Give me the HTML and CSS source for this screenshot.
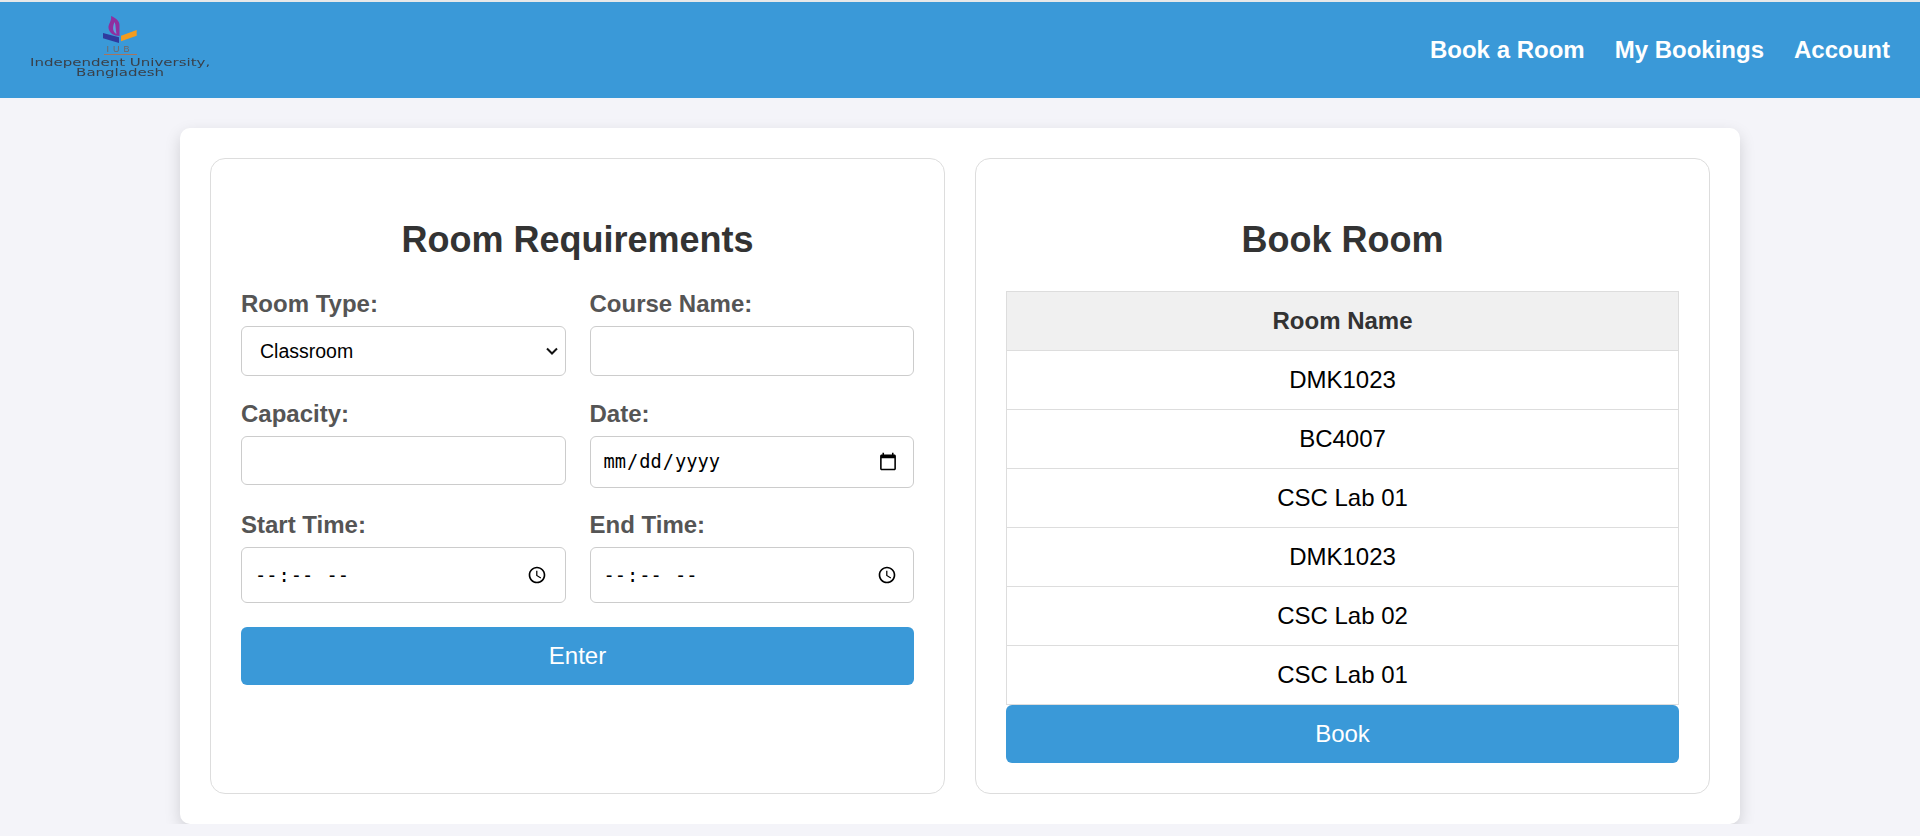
FILE: index.html
```html
<!DOCTYPE html>
<html lang="en">
<head>
  <meta charset="UTF-8" />
  <meta name="viewport" content="width=device-width, initial-scale=1.0"/>
  <title>Book a Room</title>
  <link rel="stylesheet" href="styles.css">
</head>
<body>

<!-- Navigation -->
<nav class="navbar">
  <div class="logo">
    <svg class="logo-mark" width="34" height="28" viewBox="0 0 34 28">
      <path d="M8 0 C13 2 16.500 5 16.500 9 L16.500 20 C11 20 6 17 5.500 12 C5 8 9 5 8 0 Z" fill="#8f2f9f"/>
      <path d="M11.500 6 C13 9 12.500 14 13.500 18 C10 16 9 12 11.500 6 Z" fill="#5fa0dc"/>
      <path d="M0 17 L16 21.300 L16 27 L0 22.300 Z" fill="#2f3a9e"/>
      <path d="M18 19.700 L33.700 14 L33.700 19.700 L18 25.300 Z" fill="#f39c1f"/>
    </svg>
    <span class="logo-iub">IUB</span>
    <span class="logo-name">Independent University,<br>Bangladesh</span>
  </div>
  <div class="nav-links">
    <a href="#book">Book a Room</a>
    <a href="#bookings">My Bookings</a>
    <a href="#account">Account</a>
  </div>
</nav>

<main class="container">

  <!-- Requirements -->
  <section class="panel">
    <h2>Room Requirements</h2>
    <form class="req-form">
      <div class="field-grid">
        <div class="field">
          <label for="roomType">Room Type:</label>
          <div class="select-wrap">
            <select id="roomType" class="h-select">
              <option>Classroom</option>
              <option>Lab</option>
            </select>
            <svg class="chevron" width="12" height="8" viewBox="0 0 12 8">
              <path d="M1 1.500 L6 6.500 L11 1.500" fill="none" stroke="#111" stroke-width="2"/>
            </svg>
          </div>
        </div>
        <div class="field">
          <label for="course">Course Name:</label>
          <input type="text" id="course" class="h-select">
        </div>
        <div class="field">
          <label for="capacity">Capacity:</label>
          <input type="text" id="capacity" class="h-text">
        </div>
        <div class="field">
          <label for="date">Date:</label>
          <input type="date" id="date" class="h-date">
        </div>
        <div class="field">
          <label for="start">Start Time:</label>
          <input type="time" id="start" class="h-time">
        </div>
        <div class="field">
          <label for="end">End Time:</label>
          <input type="time" id="end" class="h-time">
        </div>
      </div>
      <button type="button" class="btn">Enter</button>
    </form>
  </section>

  <!-- Room list -->
  <section class="panel">
    <h2>Book Room</h2>
    <table class="rooms">
      <thead>
        <tr><th>Room Name</th></tr>
      </thead>
      <tbody>
        <tr><td>DMK1023</td></tr>
        <tr><td>BC4007</td></tr>
        <tr><td>CSC Lab 01</td></tr>
        <tr><td>DMK1023</td></tr>
        <tr><td>CSC Lab 02</td></tr>
        <tr><td>CSC Lab 01</td></tr>
      </tbody>
    </table>
    <button type="button" class="btn">Book</button>
  </section>

</main>

</body>
</html>
```

FILE: styles.css
```css
* { box-sizing: border-box; }

body {
  margin: 0;
  font-family: "Liberation Sans", Arial, sans-serif;
  background: #f4f4f9;
  overflow: hidden;
}

.navbar {
  height: 98px;
  background: #3a99d8;
  border-top: 2px solid #e6e8e9;
  display: flex;
  justify-content: space-between;
  align-items: center;
  padding: 0 30px;
}

.logo {
  width: 180px;
  margin-top: -7px;
  display: flex;
  flex-direction: column;
  align-items: center;
  color: #39404a;
  filter: blur(0.4px);
}

.logo-iub {
  width: 33px;
  margin-top: 1px;
  font-size: 9px;
  line-height: 9px;
  letter-spacing: 4px;
  text-align: center;
  color: #75655f;
  border-bottom: 1px solid #a8745c;
}

.logo-name {
  margin-top: 3px;
  font-family: "DejaVu Sans", sans-serif;
  font-size: 10px;
  line-height: 10px;
  text-align: center;
  white-space: nowrap;
  transform: scaleX(1.5);
}

.nav-links {
  display: flex;
  gap: 30px;
}

.nav-links a {
  color: white;
  text-decoration: none;
  font-weight: bold;
  font-size: 24px;
}

.container {
  width: 1560px;
  height: 696px;
  margin: 30px auto 0;
  padding: 30px;
  display: flex;
  gap: 30px;
  background: white;
  border-radius: 10px;
  box-shadow: 0 6px 16px rgba(0,0,0,0.15);
}

.panel {
  flex: 1;
  padding: 30px;
  border: 1px solid #ddd;
  border-radius: 15px;
}

.panel h2 {
  margin: 32px 0;
  font-size: 36px;
  line-height: 37px;
  text-align: center;
  color: #333;
}

.field-grid {
  display: grid;
  grid-template-columns: 1fr 1fr;
  gap: 23.5px 24px;
  align-items: start;
}

.field label {
  display: block;
  margin-bottom: 8px;
  font-size: 24px;
  line-height: 28px;
  font-weight: bold;
  color: #555;
}

.field input, .field select {
  display: block;
  width: 100%;
  padding: 10px 18px;
  font-size: 19.5px;
  font-family: inherit;
  color: black;
  background: white;
  border: 1px solid #ccc;
  border-radius: 6px;
}

.field select { appearance: none; }

.select-wrap { position: relative; }

.chevron {
  position: absolute;
  right: 8px;
  top: 21px;
  pointer-events: none;
}

.field input[type="date"], .field input[type="time"] {
  font-family: "DejaVu Sans Mono", "Liberation Mono", monospace;
  font-size: 18.7px;
  padding: 10px 12px;
}

.field input::-webkit-calendar-picker-indicator {
  width: 20px;
  height: 20px;
  margin-right: 1px;
}

#start::-webkit-calendar-picker-indicator { margin-right: 3px; }

.h-select { height: 50px; }
.h-text { height: 49px; }
.field .h-date { height: 52px; }
.field .h-time { height: 56px; }

.btn {
  display: block;
  width: 100%;
  height: 58px;
  border: none;
  border-radius: 6px;
  background: #3a99d8;
  color: white;
  font-family: inherit;
  font-size: 24px;
}

.req-form .btn { margin-top: 24px; }

.rooms {
  width: 100%;
  margin-top: 33px;
  border-collapse: collapse;
  font-size: 24px;
}

.rooms th, .rooms td {
  height: 59px;
  padding: 0;
  text-align: center;
  border: 1px solid #ddd;
}

.rooms th {
  background: #f0f0f0;
  color: #333;
}
```
